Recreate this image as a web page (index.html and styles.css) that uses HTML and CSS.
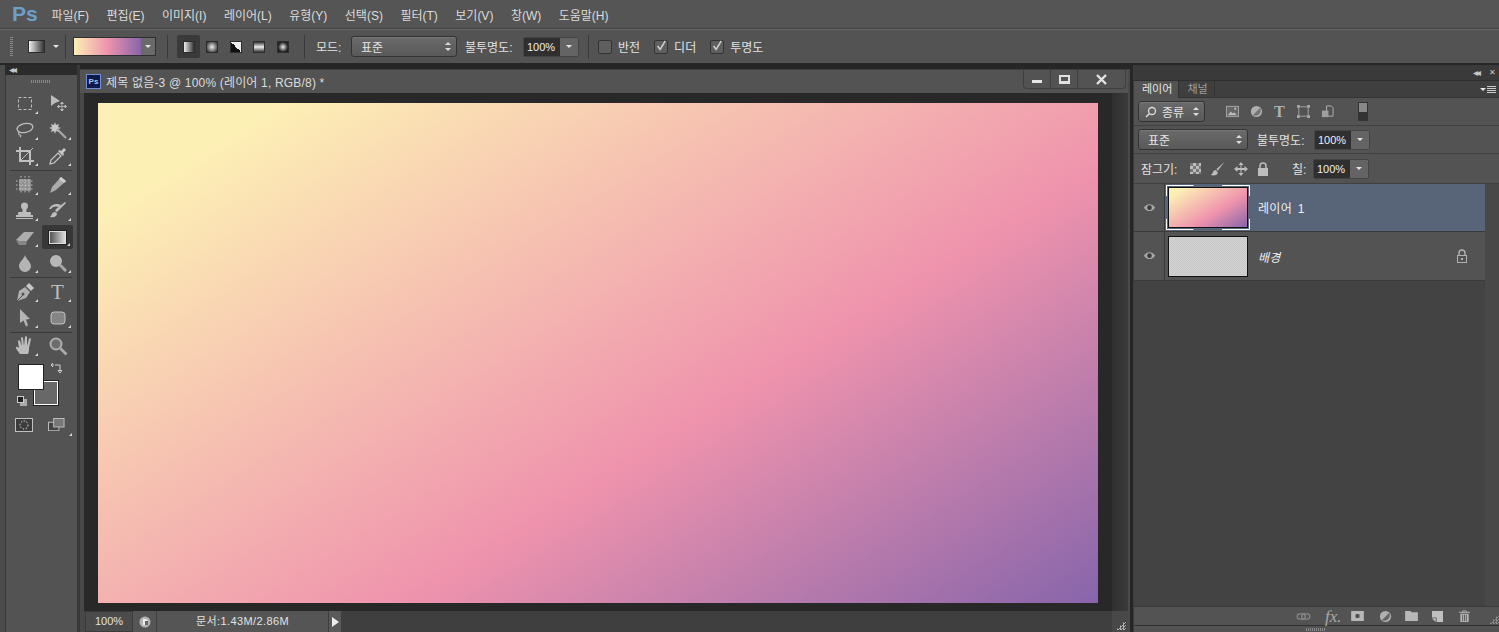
FILE: index.html
```html
<!DOCTYPE html>
<html lang="ko">
<head>
    <meta charset="UTF-8">
    <title>Photoshop</title>
    <link rel="stylesheet" href="styles.css">
</head>
<body>
    <div class="menubar">
        <div class="logo">Ps</div>
        <span>파일(F)</span>
        <span>편집(E)</span>
        <span>이미지(I)</span>
        <span>레이어(L)</span>
        <span>유형(Y)</span>
        <span>선택(S)</span>
        <span>필터(T)</span>
        <span>보기(V)</span>
        <span>창(W)</span>
        <span>도움말(H)</span>
    </div>

    <div class="options">
        <div class="grip-v"></div>
        <div class="tool-preview"></div>
        <div class="caret caret-preview"></div>
        <div class="sep sep-a"></div>
        <div class="picker">
            <div class="picker-grad"></div>
            <div class="picker-btn"><div class="caret"></div></div>
        </div>
        <div class="sep sep-b"></div>
        <div class="modes">
            <div class="mode active"><div class="mode-i m-linear"></div></div>
            <div class="mode"><div class="mode-i m-radial"></div></div>
            <div class="mode"><div class="mode-i m-angle"></div></div>
            <div class="mode"><div class="mode-i m-reflect"></div></div>
            <div class="mode"><div class="mode-i m-diamond"></div></div>
        </div>
        <div class="sep sep-c"></div>
        <span class="lbl lbl-mode">모드:</span>
        <div class="select select-mode">표준<div class="updown"></div></div>
        <span class="lbl lbl-opacity">불투명도:</span>
        <div class="percent percent-top"><div class="percent-val">100%</div><div class="percent-btn"><div class="caret"></div></div></div>
        <div class="sep sep-d"></div>
        <div class="check"></div>
        <span class="lbl lbl-check">반전</span>
        <div class="check on"><svg viewBox="0 0 14 14"><path d="M3 7l3 4 6-10" fill="none" stroke="#d0d0d0" stroke-width="1.800"/></svg></div>
        <span class="lbl lbl-check">디더</span>
        <div class="check on"><svg viewBox="0 0 14 14"><path d="M3 7l3 4 6-10" fill="none" stroke="#d0d0d0" stroke-width="1.800"/></svg></div>
        <span class="lbl lbl-check">투명도</span>
    </div>

    <div class="workspace">
        <div class="toolbar">
            <div class="dock-head"><span class="arrows">◂◂</span></div>
            <div class="grip-h"></div>

            <div class="tools">
                <div class="tool more"><svg viewBox="0 0 20 20"><rect x="3.500" y="3.500" width="13" height="12" fill="none" stroke="#bdbdbd" stroke-dasharray="3 2"/></svg></div>
                <div class="tool"><svg viewBox="0 0 20 20"><path d="M3 1l9 6-5 2-4 3z" fill="#bdbdbd"/><path d="M14 8v9M9.500 12.500h9M14 8l-1.500 1.500h3zM14 17l-1.500-1.500h3zM9.500 12.500l1.500-1.500v3zM18.500 12.500l-1.500-1.500v3z" fill="#bdbdbd" stroke="#bdbdbd" stroke-width=".8"/></svg></div>
                <div class="tool more"><svg viewBox="0 0 20 20"><ellipse cx="10" cy="8" rx="8" ry="4.500" fill="none" stroke="#bdbdbd" stroke-width="1.300" transform="rotate(-12 10 8)"/><path d="M4 12c-1 2 0 3 1 3s1 1 0 2" fill="none" stroke="#bdbdbd" stroke-width="1.200"/></svg></div>
                <div class="tool more"><svg viewBox="0 0 20 20"><path d="M7 2l1 3 3-1-1 3 3 1-3 1 1 3-3-1-1 3-1-3-3 1 1-3-3-1 3-1-1-3 3 1z" fill="#c8c8c8"/><path d="M9 9l9 9" stroke="#a8a8a8" stroke-width="2.200"/></svg></div>
                <div class="tool more"><svg viewBox="0 0 20 20"><path d="M5 1v14h14M1 5h14v14" fill="none" stroke="#c0c0c0" stroke-width="2"/><path d="M6 14L18 2" stroke="#c0c0c0"/></svg></div>
                <div class="tool more"><svg viewBox="0 0 20 20"><path d="M2 18l1-4 7-7 3 3-7 7z" fill="#555" stroke="#c8c8c8" stroke-width="1.200"/><path d="M10 5l5 5 1-2-1-1 3-3-2-2-3 3-1-1z" fill="#c8c8c8"/></svg></div>
                <div class="tool-sep"></div>
                <div class="tool more"><svg viewBox="0 0 20 20"><rect x="4" y="4" width="12" height="12" rx="1" fill="#8f8f8f"/><path d="M1 6h18M1 10h18M1 14h18M6 1v18M10 1v18M14 1v18" stroke="#bdbdbd" stroke-dasharray="1.500 1.500" fill="none"/></svg></div>
                <div class="tool more"><svg viewBox="0 0 20 20"><path d="M2 18l2-6 9-10 5 4-10 9z" fill="#ababab"/><path d="M13 2l5 4-2 2-5-4z" fill="#d0d0d0"/></svg></div>
                <div class="tool more"><svg viewBox="0 0 20 20"><rect x="1" y="14" width="17" height="2" fill="#bdbdbd"/><rect x="1" y="17" width="17" height="1" fill="#bdbdbd"/><rect x="7.500" y="6" width="4" height="6" fill="#bdbdbd"/><circle cx="9.500" cy="5" r="3.500" fill="#bdbdbd"/><rect x="3" y="11" width="13" height="3" rx="1" fill="#bdbdbd"/></svg></div>
                <div class="tool more"><svg viewBox="0 0 20 20"><path d="M1 8c2-5 8-6 12-4l-2 2c-3-1-6-1-8 2z" fill="#bdbdbd"/><path d="M18 2L9 11l-2-1 1-2 9-7zM7 11c-3 0-3 3-5 5 3 1 7 0 7-4z" fill="#bdbdbd"/></svg></div>
                <div class="tool more"><svg viewBox="0 0 20 20"><path d="M1 13L9 5h10l-7 9H4z" fill="#adadad"/><path d="M1 13l3 5h7l1-4H4z" fill="#858585"/></svg></div>
                <div class="tool active more"><div class="gradient-i"></div></div>
                <div class="tool more"><svg viewBox="0 0 20 20"><path d="M10 2c-1 4-6 7-6 11a6 6 0 0012 0c0-4-5-7-6-11z" fill="#b4b4b4"/></svg></div>
                <div class="tool more"><svg viewBox="0 0 20 20"><circle cx="8" cy="8" r="6" fill="#b8b8b8"/><path d="M12 12l6 6" stroke="#a8a8a8" stroke-width="3"/></svg></div>
                <div class="tool-sep"></div>
                <div class="tool more"><svg viewBox="0 0 20 20"><path d="M2 19l2-10 6-4 5 5-4 6z" fill="#b0b0b0"/><path d="M2 19l6-6" stroke="#535353"/><circle cx="8" cy="12" r="1.500" fill="#535353"/><path d="M11 4l3-3 5 5-3 3z" fill="#c8c8c8"/></svg></div>
                <div class="tool more"><span class="type-t">T</span></div>
                <div class="tool more"><svg viewBox="0 0 20 20"><path d="M5 1l10 10-4 .5 2 6-2 1-2.500-6L5 15z" fill="#b4b4b4"/></svg></div>
                <div class="tool more"><svg viewBox="0 0 20 20"><rect x="3" y="4" width="14" height="12" rx="3" fill="#858585" stroke="#c0c0c0"/></svg></div>
                <div class="tool-sep"></div>
                <div class="tool more"><svg viewBox="0 0 20 20"><path d="M5 18c-2-3-5-6-4-7s3 1 3 1L3 5c0-1 2-1 2 0l2 5-1-8c0-1 2-1 2 0l1 8 1-9c0-1 2-1 2 0l0 9 2-7c0-1 2-1 2 0l-2 9c0 2 0 4-1 6z" fill="#bdbdbd"/></svg></div>
                <div class="tool"><svg viewBox="0 0 20 20"><circle cx="8" cy="8" r="5.500" fill="#6c6c6c" stroke="#adadad" stroke-width="2"/><path d="M12.500 12.500l6 6" stroke="#adadad" stroke-width="2.600"/></svg></div>
            </div>

            <div class="swatches">
                <div class="swatch-bg"></div>
                <div class="swatch-fg"></div>
                <svg class="swap" viewBox="0 0 12 12"><path d="M1 3h3M1 3l2-2M1 3l2 2M5 3h5v6M10 11L8 8.500h4z" fill="none" stroke="#d0d0d0"/></svg>
                <div class="defaults"></div>
            </div>

            <div class="tool-row">
                <div class="quickmask"><svg viewBox="0 0 18 14"><rect x=".5" y=".5" width="17" height="13" fill="#3c3c3c" stroke="#c0c0c0"/><circle cx="9" cy="7" r="4" fill="none" stroke="#e0e0e0" stroke-dasharray="1.500 1.500"/></svg></div>
                <div class="screenmode more"><svg viewBox="0 0 18 14"><rect x=".5" y="4.500" width="11" height="9" fill="#444" stroke="#c0c0c0"/><rect x="6" y=".5" width="11" height="9" fill="#777" stroke="#c0c0c0"/></svg></div>
            </div>
        </div>

        <div class="docwin">
            <div class="titlebar">
                <div class="ps-tab">Ps</div>
                <span class="doc-title">제목 없음-3 @ 100% (레이어 1, RGB/8) *</span>
                <div class="winbtns">
                    <div class="winbtn"><div class="w-min"></div></div>
                    <div class="winbtn"><div class="w-max"></div></div>
                    <div class="winbtn w-wide"><svg viewBox="0 0 11 11" width="11" height="11"><path d="M1 1l9 9M10 1l-9 9" stroke="#e4e4e4" stroke-width="2.400"/></svg></div>
                </div>
            </div>
            <div class="canvas-area">
                <div class="canvas"></div>
                <div class="scroll-strip"></div>
            </div>
            <div class="statusbar">
                <div class="zoom-box">100%</div>
                <div class="status-icon"><svg viewBox="0 0 12 12"><circle cx="6" cy="6" r="5.500" fill="#b4b4b4"/><path d="M4 3h3l2 2v4H4z" fill="#eee"/><path d="M6 5h3v4H6z" fill="#666"/></svg></div>
                <div class="status-text">문서:1.43M/2.86M</div>
                <div class="status-arrow"></div>
                <div class="status-rest"></div>
                <div class="resize-grip"></div>
            </div>
        </div>

        <div class="panel">
            <div class="panel-head"><span class="arrows">◂◂</span><span class="close-x">✕</span></div>
            <div class="tabs">
                <div class="tab active">레이어</div>
                <div class="tab">채널</div>
                <div class="tab-fill"><div class="caret caret-menu"></div><div class="menu-lines"></div></div>
            </div>
            <div class="panel-body">
                <div class="prow filter-row">
                    <div class="select select-kind"><svg class="search" viewBox="0 0 12 12"><circle cx="7" cy="5" r="3.500" fill="none" stroke="#ddd" stroke-width="1.300"/><path d="M4.500 7.500L1 11" stroke="#ddd" stroke-width="1.500"/></svg>종류<div class="updown"></div></div>
                    <div class="filter-icons">
                        <svg viewBox="0 0 14 12"><rect x=".5" y=".5" width="13" height="11" fill="#666" stroke="#a8a8a8"/><path d="M2 10l3-4 2 2 2-1 3 3z" fill="#bcbcbc"/><rect x="9" y="2" width="2" height="2" fill="#c4c4c4"/></svg>
                        <svg viewBox="0 0 14 14"><circle cx="7" cy="7" r="6" fill="#b0b0b0"/><path d="M11 3L3 11a6 6 0 008-8z" fill="#757575"/></svg>
                        <span class="type-t type-small">T</span>
                        <svg viewBox="0 0 14 14"><path d="M2 2h10v10H2z" fill="none" stroke="#a8a8a8"/><path d="M0 0h3v3H0zM11 0h3v3h-3zM0 11h3v3H0zM11 11h3v3h-3z" fill="#a8a8a8"/></svg>
                        <svg viewBox="0 0 14 14"><path d="M6 1h5l2 2v9H6z" fill="none" stroke="#b4b4b4"/><path d="M1 6h7v7H1z" fill="#a0a0a0"/></svg>
                    </div>
                    <div class="filter-toggle"></div>
                </div>
                <div class="prow">
                    <div class="select select-blend">표준<div class="updown"></div></div>
                    <span class="lbl lbl-panel">불투명도:</span>
                    <div class="percent"><div class="percent-val">100%</div><div class="percent-btn"><div class="caret"></div></div></div>
                </div>
                <div class="prow lock-row">
                    <span class="lbl lbl-lock">잠그기:</span>
                    <div class="lock-icons">
                        <div class="checker-i"></div>
                        <svg viewBox="0 0 16 14"><path d="M15 0L7 7l1 2zM6 8c-3 0-2 4-5 5 4 1 8 0 7-3z" fill="#bdbdbd"/></svg>
                        <svg viewBox="0 0 14 14"><path d="M7 0l2.500 3h-2v3h3V4L14 7l-3.500 3V8h-3v3h2L7 14l-2.500-3h2V8h-3v2L0 7l3.500-3v2h3V3h-2z" fill="#bdbdbd"/></svg>
                        <svg viewBox="0 0 12 14"><path d="M3 6V4a3 3 0 016 0v2" fill="none" stroke="#bdbdbd" stroke-width="1.500"/><rect x="1" y="6" width="10" height="8" fill="#bdbdbd"/></svg>
                    </div>
                    <span class="lbl lbl-fill">칠:</span>
                    <div class="percent"><div class="percent-val">100%</div><div class="percent-btn"><div class="caret"></div></div></div>
                </div>

                <div class="layer selected">
                    <div class="eye"><svg viewBox="0 0 14 10"><path d="M1 5c3-5 9-5 12 0-3 5-9 5-12 0z" fill="#a8a8a8"/><circle cx="7" cy="5" r="2.500" fill="#3c3c3c"/></svg></div>
                    <div class="thumb thumb-grad">
                        <svg class="thumb-marks" viewBox="0 0 84 45"><path d="M.5 11V.5h27M56 .500h27.500V11M.5 34v10.500h27M56 44.500h27.500V34" fill="none" stroke="#fff"/></svg>
                    </div>
                    <span class="layer-name">레이어 1</span>
                </div>
                <div class="layer layer-bg">
                    <div class="eye"><svg viewBox="0 0 14 10"><path d="M1 5c3-5 9-5 12 0-3 5-9 5-12 0z" fill="#a8a8a8"/><circle cx="7" cy="5" r="2.500" fill="#3c3c3c"/></svg></div>
                    <div class="thumb thumb-bg"></div>
                    <span class="layer-name bg-name">배경</span>
                    <svg class="layer-lock" viewBox="0 0 12 14"><path d="M3 6V4a3 3 0 016 0v2" fill="none" stroke="#b0b0b0" stroke-width="1.400"/><rect x="1.500" y="6.500" width="9" height="7" fill="none" stroke="#b0b0b0"/><rect x="5" y="9" width="2" height="2" fill="#b0b0b0"/></svg>
                </div>
                <div class="layers-empty"></div>

                <div class="panel-foot">
                    <svg viewBox="0 0 16 10" class="f-link"><rect x="1" y="2" width="9" height="6" rx="3" fill="none" stroke="#888" stroke-width="1.400"/><rect x="6" y="2" width="9" height="6" rx="3" fill="none" stroke="#888" stroke-width="1.400"/></svg>
                    <span class="fx">fx.</span>
                    <svg viewBox="0 0 14 11" class="f-mask"><path fill-rule="evenodd" d="M0 0h14v11H0zM7 3a2.500 2.500 0 100 5 2.500 2.500 0 000-5z" fill="#b8b8b8"/></svg>
                    <svg viewBox="0 0 14 14" class="f-adj"><circle cx="7" cy="7" r="6" fill="#b0b0b0"/><path d="M11 3L3 11a6 6 0 008-8z" fill="#666"/></svg>
                    <svg viewBox="0 0 14 11" class="f-folder"><path d="M0 0h6l1 1.500h7V11H0z" fill="#b8b8b8"/></svg>
                    <svg viewBox="0 0 12 12" class="f-new"><path d="M0 0h12v12H5V7H0z" fill="#c0c0c0"/><path d="M0 8h4v4z" fill="#c0c0c0"/></svg>
                    <svg viewBox="0 0 12 13" class="f-trash"><path d="M0 2.500h12M4 2.500V1h4v1.500" fill="none" stroke="#b8b8b8"/><path d="M1.500 4h9v9h-9z" fill="#b8b8b8"/><path d="M4 5v7M6 5v7M8 5v7" stroke="#555"/></svg>
                    <div class="foot-grip"></div>
                </div>
                <div class="panel-tail"><div class="grip-h grip-tail"></div></div>
            </div>
        </div>
    </div>
</body>
</html>
```

FILE: styles.css
```css
* {
    box-sizing: border-box;
}
html, body {
    height: 100%;
}
body {
    margin: 0;
    width: 1499px;
    height: 632px;
    overflow: hidden;
    display: flex;
    flex-direction: column;
    background: #535353;
    color: #e2e2e2;
    font-family: "Liberation Sans", "Noto Sans CJK KR", sans-serif;
    font-size: 11px;
}
svg {
    display: block;
}

/* menu */
.menubar {
    height: 29px;
    flex: none;
    display: flex;
    align-items: center;
    padding-left: 12px;
    gap: 17.500px;
    background: #555;
    border-bottom: 1px solid #424242;
    font-size: 12px;
    color: #dcdcdc;
}
.logo {
    width: 23px;
    margin-right: -1px;
    color: #6e9fcb;
    font-size: 21px;
    font-weight: bold;
    line-height: 24px;
}

/* options bar */
.options {
    height: 34px;
    flex: none;
    display: flex;
    align-items: center;
    padding-left: 10px;
    background: #535353;
    border-top: 1px solid #666;
}
.grip-v {
    width: 3px;
    height: 20px;
    background: repeating-linear-gradient(#8a8a8a 0 1px, transparent 1px 2px);
}
.tool-preview {
    width: 17px;
    height: 13px;
    margin-left: 15px;
    background: linear-gradient(90deg, #eee, #333);
    border: 1px solid #2d2d2d;
}
.caret {
    width: 0;
    height: 0;
    border-left: 3px solid transparent;
    border-right: 3px solid transparent;
    border-top: 3px solid #e6e6e6;
}
.caret-preview {
    margin-left: 8px;
}
.sep {
    width: 1px;
    height: 24px;
    background: #3a3a3a;
    flex: none;
}
.sep-a {
    margin-left: 6px;
}
.picker {
    display: flex;
    width: 83px;
    height: 19px;
    margin-left: 7px;
    border: 1px solid #2f2f2f;
}
.picker-grad {
    flex: 1;
    background: linear-gradient(90deg, #fdf0b5, #ef93ad 50%, #8765ab);
}
.picker-btn {
    width: 14px;
    display: flex;
    align-items: center;
    justify-content: center;
    background: #6a6a6a;
}
.sep-b {
    margin-left: 11px;
}
.modes {
    display: flex;
    margin-left: 9px;
    align-items: center;
    gap: .5px;
}
.mode {
    width: 23px;
    height: 23px;
    display: flex;
    align-items: center;
    justify-content: center;
}
.mode.active {
    background: #3a3a3a;
    border-radius: 2px;
}
.mode-i {
    width: 12px;
    height: 12px;
    border: 1px solid #2d2d2d;
}
.m-linear {
    background: linear-gradient(90deg, #eee, #333);
}
.m-radial {
    background: radial-gradient(circle, #eee, #333 90%);
}
.m-angle {
    background: linear-gradient(45deg, #111 50%, #eee 50%);
}
.m-reflect {
    background: linear-gradient(#333, #eee 50%, #333);
}
.m-diamond {
    background: radial-gradient(circle, #eee, #222 70%);
}
.sep-c {
    margin-left: 10px;
}
.lbl {
    font-size: 12px;
    color: #e2e2e2;
    white-space: nowrap;
}
.lbl-mode {
    margin-left: 11px;
    width: 35px;
}
.select {
    position: relative;
    display: flex;
    align-items: center;
    height: 21px;
    border: 1px solid #333;
    border-radius: 3px;
    background: linear-gradient(#6a6a6a, #595959);
    box-shadow: inset 0 1px #777;
    padding-left: 9px;
    font-size: 12px;
    color: #e6e6e6;
}
.select-mode {
    width: 106px;
}
.updown {
    position: absolute;
    right: 5px;
    top: 5px;
    width: 6px;
    height: 9px;
}
.updown::before, .updown::after {
    content: "";
    position: absolute;
    left: 0;
    border-left: 3px solid transparent;
    border-right: 3px solid transparent;
}
.updown::before {
    top: 0;
    border-bottom: 3px solid #ddd;
}
.updown::after {
    bottom: 0;
    border-top: 3px solid #ddd;
}
.lbl-opacity {
    margin-left: 8px;
    width: 58px;
}
.percent {
    display: flex;
    width: 56px;
    height: 20px;
    border: 1px solid #444;
    border-radius: 2px;
}
.percent-val {
    width: 36px;
    background: #2f2f2f;
    color: #f0f0f0;
    font-size: 11px;
    line-height: 18px;
    padding-left: 3px;
}
.percent-btn {
    flex: 1;
    display: flex;
    align-items: center;
    justify-content: center;
    background: #646464;
}
.sep-d {
    margin-left: 9px;
}
.check {
    width: 14px;
    height: 14px;
    flex: none;
    margin-left: 9px;
    border: 1px solid #333;
    border-radius: 2px;
    background: #5f5f5f;
}
.check svg {
    margin: -1px 0 0 0;
}
.lbl-check {
    margin-left: 6px;
    margin-right: 5px;
}

/* workspace */
.workspace {
    flex: 1;
    display: flex;
    min-height: 0;
    background: #262626;
}
.toolbar {
    width: 80px;
    flex: none;
    margin-top: 2px;
    background: linear-gradient(#3a3a3a, #3a3a3a) 0 0 / 1px 100% no-repeat, #535353;
    border-left: 5px solid #4c4c4c;
    border-right: 3px solid #383838;
}
.dock-head {
    height: 10px;
    background: #2b2b2b;
    display: flex;
    align-items: center;
    padding-left: 4px;
}
.arrows {
    font-size: 10px;
    line-height: 8px;
    letter-spacing: -2px;
    color: #c8c8c8;
}
.grip-h {
    width: 20px;
    height: 3px;
    margin: 5px auto 0 26px;
    background: repeating-linear-gradient(90deg, #8a8a8a 0 1px, transparent 1px 2px);
}
.tools {
    display: grid;
    grid-template-columns: 33px 33px;
    grid-template-rows: repeat(3, 26px) 3px repeat(4, 26px) 3px repeat(2, 26px) 2px 26px;
    padding: 8px 0 0 3px;
}
.tools .tool-sep {
    grid-column: 1 / 3;
    height: 1px;
    margin: 0 2px;
    background: #3a3a3a;
    align-self: center;
}
.tool {
    position: relative;
    display: flex;
    align-items: center;
    justify-content: center;
}
.tool svg {
    width: 20px;
    height: 20px;
}
.tool.active {
    background: #373737;
    border-radius: 2px;
    margin: 1px;
}
.more::after {
    content: "";
    position: absolute;
    right: 3px;
    bottom: 3px;
    border-left: 3px solid transparent;
    border-bottom: 3px solid #d8d8d8;
}
.gradient-i {
    width: 17px;
    height: 13px;
    background: linear-gradient(90deg, #555, #ddd);
    border: 1px solid #ddd;
    outline: 1px solid #222;
}
.type-t {
    font-family: "Liberation Serif", serif;
    font-size: 21px;
    line-height: 20px;
    color: #bdbdbd;
}
.swatches {
    position: relative;
    height: 41px;
    margin-top: 5px;
}
.swatch-fg, .swatch-bg {
    position: absolute;
    width: 26px;
    height: 26px;
    border: 1px solid #222;
}
.swatch-fg {
    left: 13px;
    top: 0;
    background: #fff;
}
.swatch-bg {
    left: 28px;
    top: 16px;
    background: #686868;
    box-shadow: inset 0 0 0 1px #fff;
}
.swap {
    position: absolute;
    left: 45px;
    top: -2px;
    width: 12px;
    height: 12px;
}
.defaults {
    position: absolute;
    left: 12px;
    top: 32px;
    width: 7px;
    height: 7px;
    background: #222;
    border: 1px solid #ccc;
    box-shadow: 3px 3px 0 #aaa;
}
.tool-row {
    display: flex;
    margin: 13px 0 0 10px;
    gap: 15px;
}
.quickmask, .screenmode {
    position: relative;
    width: 18px;
    height: 14px;
}
.screenmode {
    width: 24px;
}
.screenmode svg {
    width: 17px;
}
.screenmode.more::after {
    right: 0;
    bottom: -4px;
}

/* document window */
.docwin {
    width: 1050px;
    flex: none;
    margin-top: 6px;
    display: flex;
    flex-direction: column;
    border-top: 1px solid #3f3f3f;
    border-right: 2px solid #4a4a4a;
}
.titlebar {
    height: 23px;
    flex: none;
    display: flex;
    background: #535353;
    align-items: center;
    padding-left: 6px;
}
.ps-tab {
    width: 15px;
    height: 15px;
    border: 1px solid #6f8fd8;
    background: #0b1a4b;
    color: #a9c4ee;
    font-size: 8px;
    font-weight: bold;
    line-height: 13px;
    text-align: center;
}
.doc-title {
    margin-left: 5px;
    font-size: 12px;
    letter-spacing: .18px;
    color: #dcdcdc;
}
.winbtns {
    display: flex;
    align-self: flex-start;
    height: 19px;
    margin: 0 2px 0 auto;
    border: 1px solid #3f3f3f;
    border-top: 0;
    border-radius: 0 0 4px 4px;
}
.winbtn {
    width: 27px;
    display: flex;
    align-items: center;
    justify-content: center;
    border-right: 1px solid #3f3f3f;
}
.w-wide {
    width: 47px;
    border-right: 0;
}
.w-min {
    width: 10px;
    height: 3px;
    margin-top: 4px;
    background: #e6e6e6;
}
.w-max {
    width: 11px;
    height: 9px;
    border: 2px solid #e0e0e0;
    border-bottom-width: 3px;
}
.canvas-area {
    flex: 1;
    display: flex;
    min-height: 0;
    background: linear-gradient(90deg, #484848 0 4px, #282828 4px);
    padding: 10px 0 8px 18px;
}
.canvas {
    width: 1000px;
    height: 500px;
    flex: none;
    background: linear-gradient(148deg, #fdf0b5 10%, #ef93ad 61.500%, #8765ab 100%);
}
.scroll-strip {
    margin: -10px 0 -8px 14px;
    flex: 1;
    background: linear-gradient(90deg, #2f2f2f, #3a3a3a);
}
.statusbar {
    height: 21px;
    flex: none;
    display: flex;
    align-items: stretch;
    background: linear-gradient(90deg, #484848 0 5px, #3f3f3f 5px);
    padding-left: 5px;
    font-size: 11px;
    line-height: 19px;
}
.zoom-box {
    width: 48px;
    padding-left: 9px;
    background: #4b4b4b;
    border: 1px solid #3a3a3a;
}
.status-icon {
    width: 24px;
    display: flex;
    align-items: center;
    justify-content: center;
    background: #555;
    border-right: 1px solid #404040;
}
.status-icon svg {
    width: 12px;
}
.status-text {
    width: 171px;
    text-align: center;
    letter-spacing: .4px;
    background: #555;
    line-height: 21px;
}
.status-arrow {
    width: 13px;
    position: relative;
    background: #5a5a5a;
    border-left: 1px solid #3c3c3c;
}
.status-arrow::after {
    content: "";
    position: absolute;
    left: 3px;
    top: 6px;
    border-left: 7px solid #eee;
    border-top: 5px solid transparent;
    border-bottom: 5px solid transparent;
}
.status-rest {
    flex: 1;
}
.resize-grip {
    position: relative;
    width: 16px;
    background: #484848;
}
.resize-grip::after, .foot-grip::after {
    content: "";
    position: absolute;
    right: 2px;
    bottom: 2px;
    width: 10px;
    height: 10px;
    background: repeating-conic-gradient(#b4b4b4 0 25%, #404040 0 50%) 0 0 / 3px 3px;
    clip-path: polygon(100% 0, 100% 100%, 0 100%);
}

/* layers panel */
.panel {
    flex: 1;
    margin: 2px 0 0 3px;
    display: flex;
    flex-direction: column;
    min-width: 0;
    background: #535353;
    border-left: 1px solid #3c3c3c;
}
.panel-head {
    height: 15px;
    flex: none;
    display: flex;
    justify-content: flex-end;
    align-items: center;
    gap: 10px;
    padding-right: 3px;
    background: #3a3a3a;
}
.close-x {
    font-size: 8px;
    color: #c8c8c8;
}
.tabs {
    height: 18px;
    flex: none;
    display: flex;
    background: #3f3f3f;
    border-top: 1px solid #2f2f2f;
    border-bottom: 1px solid #333;
    font-size: 11px;
}
.tab {
    padding: 0 6px 0 8px;
    line-height: 16px;
    color: #a0a0a0;
    border-right: 1px solid #333;
}
.tab.active {
    background: #535353;
    color: #e6e6e6;
    height: 17px;
}
.tab-fill {
    flex: 1;
    display: flex;
    align-items: center;
    justify-content: flex-end;
    gap: 1px;
    padding-right: 3px;
}
.menu-lines {
    width: 9px;
    height: 7px;
    background: repeating-linear-gradient(#ccc 0 1px, transparent 1px 2px);
}
.panel-body {
    flex: 1;
    display: flex;
    flex-direction: column;
    min-height: 0;
    background: #484848;
}
.prow {
    height: 28px;
    flex: none;
    display: flex;
    align-items: center;
    padding-left: 4px;
    background: #535353;
    border-bottom: 1px solid #404040;
}
.select-kind {
    width: 67px;
    padding-left: 6px;
    gap: 5px;
}
.search {
    width: 12px;
    height: 12px;
}
.filter-icons {
    display: flex;
    align-items: center;
    gap: 11px;
    margin-left: 21px;
}
.filter-icons svg {
    width: 13px;
    height: 13px;
}
.type-small {
    font-size: 16px;
    font-weight: bold;
    line-height: 14px;
    width: 12px;
    color: #b0b0b0;
}
.filter-toggle {
    width: 10px;
    height: 19px;
    margin-left: 24px;
    background: linear-gradient(#888 0 50%, #333 50%);
    border: 1px solid #333;
}
.select-blend {
    width: 110px;
}
.lbl-panel {
    margin-left: 9px;
    width: 57px;
}
.lock-row {
    height: 30px;
}
.lbl-lock {
    margin-left: 3px;
    width: 49px;
}
.lock-icons {
    display: flex;
    align-items: center;
    gap: 8px;
}
.lock-icons svg {
    width: 14px;
    height: 14px;
}
.lock-icons svg:nth-child(2) {
    width: 17px;
}
.checker-i {
    width: 11px;
    height: 11px;
    background: conic-gradient(#bdbdbd 25%, #777 0 50%, #bdbdbd 0 75%, #777 0) 0 0 / 6px 6px;
}
.lbl-fill {
    margin-left: 22px;
    width: 21px;
}
.layer {
    height: 48px;
    flex: none;
    display: flex;
    align-items: center;
    margin-right: 14px;
    background: #535353;
    border-bottom: 1px solid #3a3a3a;
    position: relative;
}
.layer-bg {
    height: 49px;
}
.eye {
    width: 31px;
    height: 100%;
    display: flex;
    align-items: center;
    justify-content: center;
    background: #535353;
    border-right: 1px solid #3a3a3a;
    flex: none;
}
.eye svg {
    width: 13px;
}
.layer.selected {
    background: #586477;
}
.thumb {
    position: relative;
    width: 80px;
    height: 41px;
    margin-left: 3px;
    border: 1px solid #111;
    flex: none;
}
.thumb-grad {
    background: linear-gradient(148deg, #fdf0b5 10%, #ef93ad 61.500%, #8765ab 100%);
}
.thumb-bg {
    background: repeating-conic-gradient(#d2d2d2 0 25%, #c8c8c8 0 50%) 0 0 / 2px 2px;
}
.thumb-marks {
    position: absolute;
    left: -3px;
    top: -3px;
    width: 84px;
    height: 45px;
}
.layer-name {
    margin-left: 10px;
    font-size: 12px;
    word-spacing: 2px;
    letter-spacing: .3px;
    color: #f0f0f0;
}
.bg-name {
    font-style: italic;
}
.layer-lock {
    position: absolute;
    right: 17px;
    top: 17px;
    width: 12px;
    height: 14px;
}
.layers-empty {
    flex: 1;
    background: #434343;
    margin-right: 14px;
}
.panel-foot {
    position: relative;
    height: 19px;
    flex: none;
    display: flex;
    align-items: center;
    background: #535353;
    border-top: 1px solid #3a3a3a;
    padding-left: 162px;
}
.panel-foot svg {
    flex: none;
}
.f-link {
    width: 15px;
    height: 9px;
}
.fx {
    margin-left: 14px;
    width: 20px;
    font-family: "Liberation Serif", serif;
    font-style: italic;
    font-size: 17px;
    line-height: 17px;
    color: #a8a8a8;
}
.f-mask {
    margin-left: 6px;
    width: 13px;
    height: 10px;
}
.f-adj {
    margin-left: 15px;
    width: 13px;
    height: 13px;
}
.f-folder {
    margin-left: 13px;
    width: 13px;
    height: 10px;
}
.f-new {
    margin-left: 14px;
    width: 11px;
    height: 11px;
}
.f-trash {
    margin-left: 16px;
    width: 11px;
    height: 12px;
}
.foot-grip::after {
    right: 0;
    bottom: 1px;
    background: repeating-conic-gradient(#8a8a8a 0 25%, #535353 0 50%) 0 0 / 3px 3px;
}
.panel-tail {
    height: 7px;
    flex: none;
    background: #535353;
    border-top: 1px solid #2f2f2f;
}
.grip-tail {
    margin: 2px 0 0 172px;
}
```
